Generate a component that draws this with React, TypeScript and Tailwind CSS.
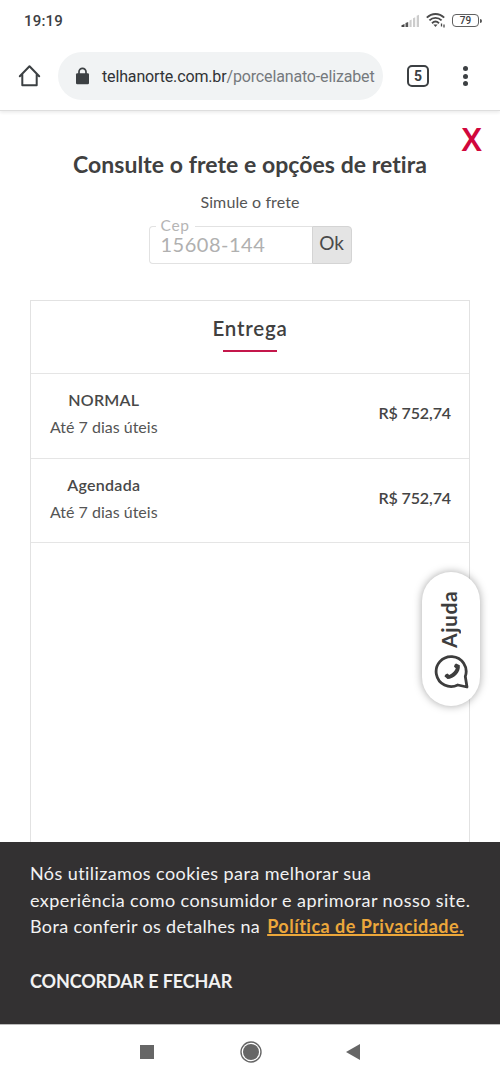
import clsx from "clsx";

interface DeliveryOption {
  name: string;
  deadline: string;
  price: string;
}

const options: DeliveryOption[] = [
  { name: "NORMAL", deadline: "Até 7 dias úteis", price: "R$ 752,74" },
  { name: "Agendada", deadline: "Até 7 dias úteis", price: "R$ 752,74" },
];

function StatusBar() {
  return (
    <div className="flex h-[42px] items-center justify-between pl-6 pr-[18px] font-['Roboto',sans-serif] text-[#3d4043]">
      <span className="text-[15px] font-medium tracking-[0.2px]">19:19</span>
      <div className="flex items-center pb-px">
        <svg width="19" height="14" viewBox="0 0 19 14">
          <path d="M0.5 13V11.2L3.5 10V13Z" fill="#444" />
          <path d="M4.5 13V9L7.2 8V13Z" fill="#555" />
          <path d="M8.5 13V6.6L10.6 5.6V13Z" fill="#ccc" />
          <path d="M12 13V4.2L14.2 3.2V13Z" fill="#ccc" />
          <path d="M15.7 13V1.8L18 0.8V13Z" fill="#ccc" />
        </svg>
        <svg
          className="ml-[6px]"
          width="20"
          height="15"
          viewBox="0 0 20 15"
          fill="none"
          stroke="#4a4a4a"
          strokeWidth="1.9"
        >
          <path d="M0.8 4.6C6 -0.2 13 -0.2 18.2 4.6" />
          <path d="M3.4 7.4C7 4 12 4 15.6 7.4" />
          <path d="M6 10.2C8.2 8.2 10.8 8.2 13 10.2" />
          <path d="M7.4 11.6L9.5 13.9L11.6 11.6Z" fill="#4a4a4a" stroke="none" />
          <path d="M15.5 10.6V13.6M18 11.4V14.4" strokeWidth="1.3" />
        </svg>
        <div className="ml-[6px] flex h-[13px] w-[27px] items-center justify-center rounded-[4px] border-[1.5px] border-[#606060] text-[10px] font-medium leading-none">
          79
        </div>
        <div className="ml-px h-1 w-[2px] rounded-r bg-[#555]" />
      </div>
    </div>
  );
}

function BrowserBar() {
  return (
    <div className="flex h-[69px] items-center border-b border-[#dedede] pl-[18px] font-['Roboto',sans-serif] shadow-[0_2px_3px_rgba(0,0,0,0.07)]">
      <svg
        width="23"
        height="24"
        viewBox="0 0 23 24"
        fill="none"
        stroke="#3c4043"
        strokeWidth="2"
        strokeLinejoin="round"
        strokeLinecap="round"
      >
        <path d="M1.8 12.2L11.5 2.2L21.2 12.2M4.3 10.2V21.2H18.7V10.2" />
      </svg>
      <div className="ml-[17px] flex h-12 w-[325px] items-center overflow-hidden rounded-full bg-[#f1f3f4] pl-[17px]">
        <svg width="15" height="18" viewBox="0 0 15 18">
          <path
            d="M4 7V4.8a3.5 3.5 0 0 1 7 0V7"
            fill="none"
            stroke="#3c4043"
            strokeWidth="1.7"
          />
          <rect x="1" y="6.3" width="13" height="11" rx="1.3" fill="#3c4043" />
        </svg>
        <div className="ml-3 w-[273px] whitespace-nowrap pt-0.5 text-[16px] tracking-[-0.15px] text-[#75797d]">
          <span className="text-[#303236]">telhanorte.com.br</span>
          /porcelanato-elizabet
        </div>
      </div>
      <div className="ml-6 flex h-[22px] w-[22px] items-center justify-center rounded-[5px] border-2 border-[#3c4043] text-[14px] font-bold leading-none text-[#3c4043]">
        5
      </div>
      <div className="ml-[34px] flex flex-col gap-[2.5px]">
        <i className="size-[5px] rounded-full bg-[#3c4043]" />
        <i className="size-[5px] rounded-full bg-[#3c4043]" />
        <i className="size-[5px] rounded-full bg-[#3c4043]" />
      </div>
    </div>
  );
}

function CepForm() {
  return (
    <div className="relative mx-auto mt-[14px] flex h-[38px] w-[203px]">
      <div className="flex w-[163px] items-center rounded-l-sm border border-r-0 border-[#e2e2e2] pl-[11px] text-[20px] leading-none tracking-[0.5px] text-[#b0b0b0]">
        <span className="-mt-[3px]">15608-144</span>
      </div>
      <button className="flex w-10 items-center justify-center rounded-r-[4px] border border-[#d4d4d4] bg-[#e4e4e4] pb-[3px] text-[19px] text-[#4a4a4a]">
        Ok
      </button>
      <label className="absolute -top-2 left-[7px] bg-white px-[5px] text-[15.5px] leading-[14px] tracking-[0.7px] text-[#b5b5b5]">
        Cep
      </label>
    </div>
  );
}

function OptionRow({ option, last }: { option: DeliveryOption; last: boolean }) {
  return (
    <div
      className={clsx(
        "flex items-center justify-between border-b border-[#e5e5e5] pl-[19px] pr-[18px]",
        last ? "h-[84px]" : "h-[85px]"
      )}
    >
      <div className="-mt-[6px] text-center text-[16px] leading-[27px] text-[#484848]">
        <div className="font-semibold tracking-[0.25px]">{option.name}</div>
        <div className="text-[#555]">{option.deadline}</div>
      </div>
      <span className="mt-[-6px] text-[16px] font-semibold tracking-[-0.1px] text-[#444]">
        {option.price}
      </span>
    </div>
  );
}

function HelpButton() {
  return (
    <button className="absolute left-[422px] top-[572px] flex h-[134px] w-[58px] flex-col items-center rounded-full bg-white pr-1 pt-[18px] shadow-[0_0_9px_rgba(0,0,0,0.35)]">
      <span className="h-[58px] rotate-180 text-[21px] font-bold leading-[24px] tracking-[0.6px] text-[#3d3d3d] [writing-mode:vertical-rl]">
        Ajuda
      </span>
      <svg
        className="ml-[5px] mt-[6px]"
        width="36"
        height="36"
        viewBox="0 0 36 36"
        fill="none"
        stroke="#3d3d3d"
        strokeWidth="2.8"
        strokeLinejoin="round"
      >
        <path d="M31.3 22.5A15 15 0 1 0 23.8 31L33 33Z" />
        <path
          d="M25.8 11.2L22 9.4Q20.2 10.4 20 12.7L21.8 14.2Q20.8 18 15.3 20.9L13.4 19.6Q11 20.2 10.4 22.3L13.5 25.1C19.8 24.6 26.8 18.6 25.8 11.2Z"
          fill="#3d3d3d"
          stroke="none"
        />
      </svg>
    </button>
  );
}

function CookieBanner() {
  return (
    <div className="h-[182px] bg-[#333132] pl-[30px] pt-[18px] text-[18px] leading-[26.5px] text-[#f2f2f2]">
      <p className="whitespace-nowrap tracking-[0.41px]">Nós utilizamos cookies para melhorar sua</p>
      <p className="whitespace-nowrap tracking-[0.44px]">experiência como consumidor e aprimorar nosso site.</p>
      <p className="whitespace-nowrap tracking-[0.36px]">
        Bora conferir os detalhes na{" "}
        <a className="ml-[2px] font-bold tracking-[0.48px] text-[#eca73b] underline decoration-2">
          Política de Privacidade.
        </a>
      </p>
      <button className="mt-[28px] block font-bold tracking-[-0.12px]">CONCORDAR E FECHAR</button>
    </div>
  );
}

function NavigationBar() {
  return (
    <div className="flex h-[58px] items-center border-t border-[#bbb] pb-[3px] pl-[140px]">
      <div className="size-[14px] bg-[#666]" />
      <svg className="ml-[86px]" width="22" height="22" viewBox="0 0 22 22">
        <circle cx="11" cy="11" r="10" fill="none" stroke="#666" strokeWidth="1.4" />
        <circle cx="11" cy="11" r="8" fill="#666" />
      </svg>
      <svg className="ml-[84px]" width="14" height="16" viewBox="0 0 14 16">
        <path d="M14 0V16L0 8Z" fill="#666" />
      </svg>
    </div>
  );
}

export default function App() {
  return (
    <div className="relative flex h-[1082px] w-[500px] flex-col overflow-hidden bg-white font-['Lato',sans-serif] text-[#404040] [font-variant-ligatures:none]">
      <StatusBar />
      <BrowserBar />
      <main className="flex min-h-0 flex-1 flex-col">
        <button className="mr-[18px] mt-[13px] h-[30px] self-end font-['Noto_Sans',sans-serif] text-[32px] font-semibold leading-[30px] text-[#d1073c]">
          X
        </button>
        <h1 className="-mt-[6px] whitespace-nowrap text-center text-[23px] font-bold leading-[32px] tracking-[0.05px]">
          Consulte o frete e opções de retira
        </h1>
        <p className="mt-[12px] text-center text-[16px] leading-5 tracking-[0.1px] text-[#555]">
          Simule o frete
        </p>
        <CepForm />
        <section className="mx-[30px] mt-9 flex-1 border border-b-0 border-[#e2e2e2]">
          <div className="flex h-[73px] flex-col items-center border-b border-[#e5e5e5] pt-[15px]">
            <h2 className="text-[20.5px] font-semibold leading-6 tracking-[0.8px]">Entrega</h2>
            <div className="mt-[10px] h-[2px] w-[54px] bg-[#c4174b]" />
          </div>
          {options.map((option, index) => (
            <OptionRow
              key={option.name}
              option={option}
              last={index === options.length - 1}
            />
          ))}
        </section>
      </main>
      <HelpButton />
      <CookieBanner />
      <NavigationBar />
    </div>
  );
}
